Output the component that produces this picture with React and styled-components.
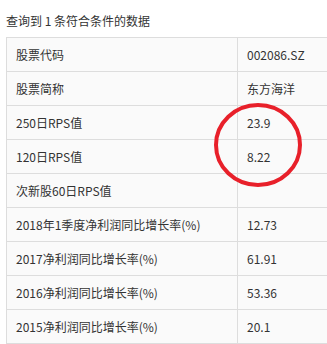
import React from 'react';
import styled, { createGlobalStyle } from 'styled-components';

const GlobalStyle = createGlobalStyle`
  html, body {
    margin: 0;
    padding: 0;
    background: #ffffff;
    overflow: hidden;
  }
  body {
    font-family: "Noto Sans CJK SC", "Noto Sans", sans-serif;
    color: #333333;
  }
`;

const Page = styled.div`
  position: relative;
  width: 327px;
  height: 344px;
  padding-left: 6px;
  box-sizing: border-box;
  overflow: hidden;
`;

const Title = styled.div`
  margin-top: 12px;
  line-height: 18px;
  font-size: 12px;
  height: 18px;
  margin-bottom: 7px;
`;

const Table = styled.table`
  border-collapse: collapse;
  width: 335px;
  table-layout: fixed;
  background: #fafafa;
  font-size: 12px;
`;

const Row = styled.tr`
  height: 34px;
`;

const Cell = styled.td`
  border: 1px solid #dddddd;
  padding: 0 0 0 9px;
  width: ${(p) => (p.$label ? '221px' : 'auto')};
  white-space: nowrap;
  line-height: 18px;
`;

const Ring = styled.svg`
  position: absolute;
  left: 212px;
  top: 101px;
`;

const rows = [
  ['股票代码', '002086.SZ'],
  ['股票简称', '东方海洋'],
  ['250日RPS值', '23.9'],
  ['120日RPS值', '8.22'],
  ['次新股60日RPS值', ''],
  ['2018年1季度净利润同比增长率(%)', '12.73'],
  ['2017净利润同比增长率(%)', '61.91'],
  ['2016净利润同比增长率(%)', '53.36'],
  ['2015净利润同比增长率(%)', '20.1'],
];

export default function App() {
  return (
    <Page>
      <GlobalStyle />
      <Title>查询到 1 条符合条件的数据</Title>
      <Table>
        <tbody>
          {rows.map(([k, v]) => (
            <Row key={k}>
              <Cell $label>{k}</Cell>
              <Cell>{v}</Cell>
            </Row>
          ))}
        </tbody>
      </Table>
      <Ring width="96" height="90" viewBox="0 0 96 90">
        <ellipse cx="46" cy="44" rx="42" ry="40" fill="none" stroke="#e8202a" strokeWidth="4" />
      </Ring>
    </Page>
  );
}
